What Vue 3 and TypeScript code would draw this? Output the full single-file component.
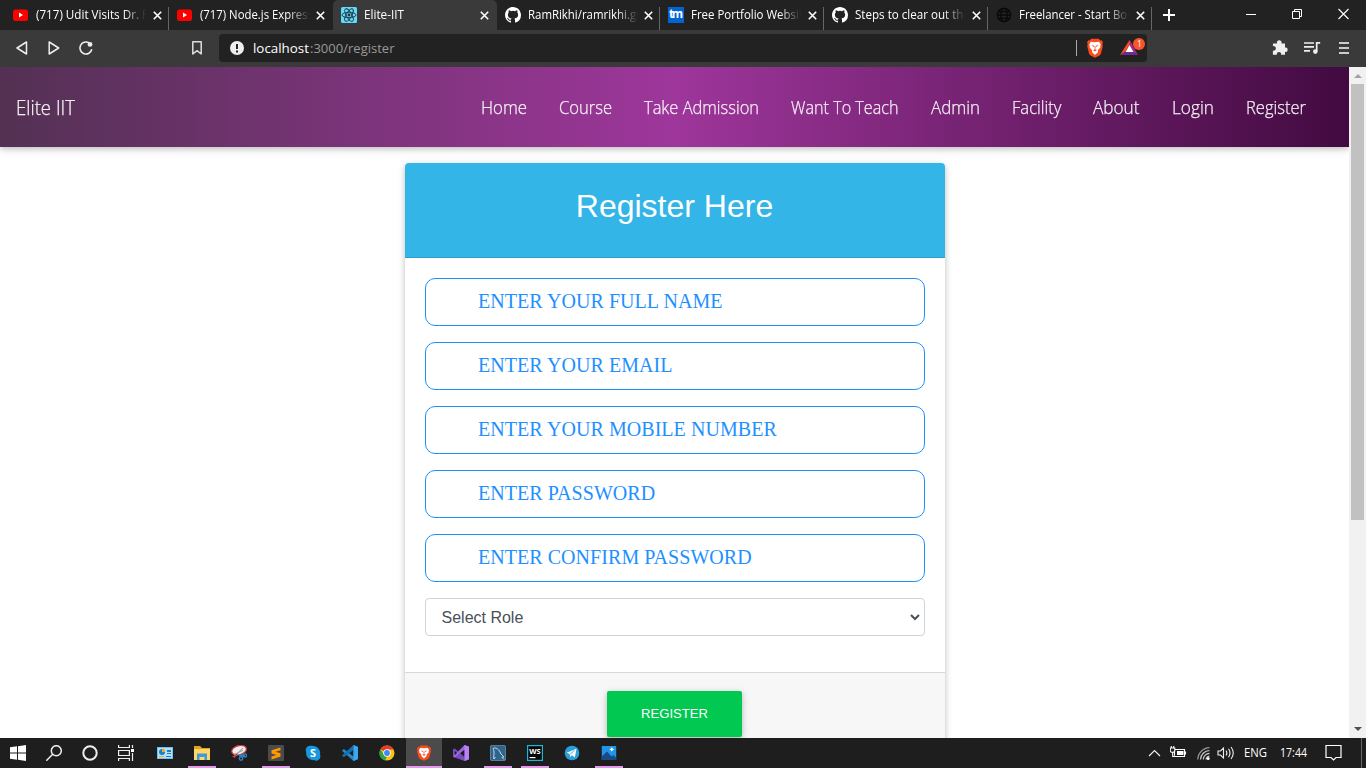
<script setup lang="ts">
import { h, type FunctionalComponent } from 'vue'

interface LabelProps { text: string; w: number; size: number; base: number; height: number; weight?: number }

// One line of text laid out to an exact advance width.
const Label: FunctionalComponent<LabelProps> = (p) =>
  h('svg', { width: p.w + 2, height: p.height, class: 'label' }, [
    h('text', {
      x: 0, y: p.base, textLength: p.w, lengthAdjust: 'spacingAndGlyphs',
      'font-size': p.size, 'font-weight': p.weight ?? 400, fill: 'currentColor',
    }, p.text),
  ])
Label.props = ['text', 'w', 'size', 'base', 'height', 'weight']

const youtube = '<rect x="0" y="2.5" width="15" height="11.5" rx="2.5" fill="#f00"/><path d="M6 5.6v5l4-2.5z" fill="#fff"/>'
const github = '<path fill="#fff" d="M8 0C3.58 0 0 3.58 0 8c0 3.54 2.29 6.53 5.47 7.59.4.07.55-.17.55-.38 0-.19-.01-.82-.01-1.49-2.01.37-2.53-.49-2.69-.94-.09-.23-.48-.94-.82-1.13-.28-.15-.68-.52-.01-.53.63-.01 1.08.58 1.23.82.72 1.21 1.87.87 2.33.66.07-.52.28-.87.51-1.07-1.78-.2-3.64-.89-3.64-3.95 0-.87.31-1.59.82-2.15-.08-.2-.36-1.02.08-2.12 0 0 .67-.21 2.2.82a7.6 7.6 0 0 1 4 0c1.53-1.04 2.2-.82 2.2-.82.44 1.1.16 1.92.08 2.12.51.56.82 1.27.82 2.15 0 3.07-1.87 3.75-3.65 3.95.29.25.54.73.54 1.48 0 1.07-.01 1.93-.01 2.2 0 .21.15.46.55.38A8 8 0 0 0 16 8c0-4.42-3.58-8-8-8z"/>'
const react = '<rect width="16" height="16" rx="1.5" fill="#61dafb"/><g fill="none" stroke="#20343c" stroke-width=".9"><ellipse cx="8" cy="8" rx="7" ry="2.7"/><ellipse cx="8" cy="8" rx="7" ry="2.7" transform="rotate(60 8 8)"/><ellipse cx="8" cy="8" rx="7" ry="2.7" transform="rotate(120 8 8)"/></g><circle cx="8" cy="8" r="1.4" fill="#20343c"/>'
const tm = '<rect width="16" height="16" fill="#0064d2"/><text x="1" y="11.2" font-size="11.5" font-weight="700" textLength="14" fill="#fff" font-family="Open Sans, sans-serif">tm</text>'
const globe = '<g fill="none" stroke="#080808" stroke-width="1.3"><circle cx="8" cy="8" r="6.7"/><ellipse cx="8" cy="8" rx="3.2" ry="6.7"/><path d="M1.3 8h13.4M2.5 4.6h11M2.5 11.4h11"/></g>'
const brave = '<path fill="#fb4b1c" d="M4.6.6h6.8l1.3 1.3 1.2-.2 1.2 1.8-.6 1.5.4 1.5-1.7 6.2-1.2 1.2L8 15.8l-4-1.9-1.200-1.200L1.100 6.500l.4-1.500-.6-1.500 1.200-1.800 1.200.2z"/><path fill="#fff" d="M4.300 3 8 3.300l3.700-.3 1.500 2.300-.6 1.200.2 1-2.300 2.300.3 1.300L8 13.500 5.200 11.100l.3-1.300-2.300-2.300.2-1-.6-1.200z"/><path fill="#e84a20" d="m4.800 5.500 2.400.6-.5 1zM11.200 5.500l-2.400.6.5 1zM7.500 6.500h1l-.2 2.300h-.6zM6.300 9.600 8 9l1.700.6L8 10.800z"/>'

const tabs = [
  { title: '(717) Udit Visits Dr. F', w: 112, icon: youtube },
  { title: '(717) Node.js Express', w: 113, icon: youtube, plain: true },
  { title: 'Elite-IIT', w: 40, icon: react, active: true },
  { title: 'RamRikhi/ramrikhi.gi', w: 111, icon: github },
  { title: 'Free Portfolio Websit', w: 112, icon: tm },
  { title: 'Steps to clear out the', w: 115, icon: github },
  { title: 'Freelancer - Start Boo', w: 115, icon: globe },
]

const links = [
  { text: 'Home', w: 46 }, { text: 'Course', w: 53 }, { text: 'Take Admission', w: 115 },
  { text: 'Want To Teach', w: 107.5 }, { text: 'Admin', w: 49 }, { text: 'Facility', w: 49.5 },
  { text: 'About', w: 46.5 }, { text: 'Login', w: 42 }, { text: 'Register', w: 60 },
]

const fields = [
  'ENTER YOUR FULL NAME', 'ENTER YOUR EMAIL', 'ENTER YOUR MOBILE NUMBER',
  'ENTER PASSWORD', 'ENTER CONFIRM PASSWORD',
]

const system = [
  '<path fill="#fff" d="M0 2.300 7 1.300V7.500H0zM8 1.200 16 0v7.500H8zM0 8.500h7v6.200l-7-1zM8 8.500h8V16l-8-1.200z"/>',
  '<g fill="none" stroke="#eee" stroke-width="1.500"><circle cx="10.300" cy="5.700" r="5"/><path d="M6.700 9.300.3 15.700"/></g>',
  '<circle cx="8" cy="8" r="6.700" fill="none" stroke="#eee" stroke-width="2"/>',
  '<g fill="none" stroke="#eee" stroke-width="1.200"><path d="M.6 0v2.500h10.800V0M.6 16v-2.500h10.800V16M.6 5.500h10.800v5H.6zM14.500 0v3M14.500 8v8"/></g><path fill="#fff" d="M13 4h3v3h-3z"/>',
]

const apps = [
  { icon: '<rect y="2" width="16" height="12" fill="#6dc0ef"/><rect x="1" y="3" width="14" height="10" fill="#b5e0f8"/><circle cx="5" cy="7" r="3" fill="#1b7fc4"/><path d="M5 7V4a3 3 0 0 1 3 3z" fill="#f6a821"/><path d="M10 5h4v2h-4zM10 8h4v1h-4zM9 11h5v1H9z" fill="#1b7fc4"/><path d="M2 11h5v1H2z" fill="#f6a821"/>' },
  { open: true, icon: '<path d="M0 1h6l2 2h8v12H0z" fill="#e8a317"/><path d="M0 4h16v11H0z" fill="#ffd766"/><path d="M3 15V8.500h10V15h-2.500v-3h-5v3z" fill="#3d9ae0"/>' },
  { icon: '<ellipse cx="8" cy="5.200" rx="7.500" ry="4.600" transform="rotate(-15 8 5)" fill="#f0eeee" stroke="#c53a3a" stroke-width="1.300"/><path d="m4 11 8-8M3 9.500l9-4" stroke="#a7abb2" stroke-width="1.100"/><path d="M1 11.500 7 8l-3 5z" fill="#cf3b3b"/><path d="m8 10 6 1" stroke="#3083c4" stroke-width="2"/><circle cx="10" cy="13.500" r="1.700" fill="none" stroke="#3083c4" stroke-width="1.400"/><circle cx="14" cy="10.500" r="1.600" fill="none" stroke="#3083c4" stroke-width="1.400"/>' },
  { open: true, icon: '<rect width="16" height="16" rx="1" fill="#4b4b4b"/><path fill="#ff9800" d="m12.500 2.500-9 2.800v3.200l5 1.600-5 1.500v2.800l9-2.800V8.300l-5-1.500 5-1.500z"/>' },
  { icon: '<path fill="#1598e0" d="M5 .8a7.300 7.300 0 0 1 4 .3 7 7 0 0 1 6 8.500 4.300 4.300 0 0 1-6 5.500A7 7 0 0 1 1.200 7 4.300 4.300 0 0 1 5 .8z"/><text x="4.900" y="12" font-size="11" font-weight="700" fill="#fff" font-family="Open Sans, sans-serif">S</text>' },
  { icon: '<path fill="#2489ca" d="m11.500 0 4.500 2v12l-4.500 2L0 5.800 1.800 4l9.700 7.500z"/><path fill="#1070b3" d="m11.500 0 .3 4.700-10 7.600L0 10.600z"/><path fill="#3ba7ef" d="m11.500 0 4.500 2v12l-4.500 2z"/>' },
  { icon: '<circle cx="8" cy="8" r="7.500" fill="#fbc116"/><path fill="#e33b2e" d="M8 8 1.500 4.200A7.500 7.500 0 0 1 14.700 4.600H8z"/><path fill="#2ba24c" d="M1.500 4.200 5 10l3 1.500-2 3.900A7.500 7.500 0 0 1 1.500 4.200z"/><circle cx="8" cy="8" r="3.700" fill="#fff"/><circle cx="8" cy="8" r="2.900" fill="#4285f4"/>' },
  { open: true, focus: true, icon: brave },
  { icon: '<path fill="#7a4bc4" d="M0 4.200 1.800 3.400 11.500 12v4L1.800 12.600 0 11.800z"/><path fill="#9d65dd" d="m11.500 0 4.500 1.800v12.400L11.500 16V4.700L1.800 12.600 0 11.500 11.500 0z"/><path fill="#1e1e1e" d="M1.800 6v4l2.200-2zM8 8l3.500-2.700v5.400z"/><path fill="#b981f5" d="m11.500 0 4.500 1.800v12.400L11.500 16z"/>' },
  { open: true, icon: '<rect x=".4" y=".4" width="15.200" height="15.200" rx="1.500" fill="#2f658d" stroke="#77a0bb" stroke-width=".7"/><path d="M4 14c-1-3 .5-4 0-7C3.500 4.500 3 3.500 3.500 3c3-.5 6 2 7 5 .5 1.500 2 2.500 3.500 4-2 0-2 0-2 .5l2 2M4 14l1.500-2" fill="none" stroke="#d5e5ef" stroke-width=".9"/>' },
  { open: true, icon: '<rect x=".6" y=".6" width="14.800" height="14.800" fill="#080808" stroke="#19b9dc" stroke-width="1.200"/><text x="2.200" y="8.700" font-size="7.500" font-weight="700" textLength="11.500" lengthAdjust="spacingAndGlyphs" fill="#fff" font-family="Open Sans, sans-serif">WS</text><path fill="#fff" d="M2.500 12h6v1.200h-6z"/>' },
  { icon: '<circle cx="8" cy="8" r="7.300" fill="#29a0da"/><path fill="#fff" d="m2.600 7.800 9.900-4-1.600 8.600-3-2.200-1.700 1.700-.5-2.900z"/><path stroke="#89bcd9" d="m5.600 9 5-3.800-4 4.500" fill="none" stroke-width=".8"/>' },
  { open: true, icon: '<rect x=".8" y="1" width="14.400" height="14" fill="#2196e8"/><path fill="#1b4a85" d="M.8 11.500 6 6.500l4.500 5 2-1.500 2.700 3V15H.8z"/><path fill="#fff" d="m10.800 2 .8 1.600 1.600.8-1.600.8-.8 1.600-.8-1.600-1.600-.8 1.600-.8z"/>' },
]
</script>

<template>
  <div class="screen">
    <div class="tabstrip">
      <div v-for="(t, i) in tabs" :key="i" class="tab" :class="{ active: t.active, plain: t.plain }">
        <svg class="favicon" width="16" height="16" viewBox="0 0 16 16" v-html="t.icon" />
        <div class="title"><Label :text="t.title" :w="t.w" :size="12" :base="19" :height="30" /></div>
        <svg class="close" width="9" height="9" viewBox="0 0 9 9"><path d="m.8.8 7.400 7.400M8.200.8.800 8.200" stroke="#fff" stroke-width="1.600" /></svg>
      </div>
      <svg class="plus" width="12" height="12"><path d="M6 0v12M0 6h12" stroke="#fff" stroke-width="2" /></svg>
      <div class="wincontrols">
        <svg width="46" height="28"><path d="M17 14.500h10" stroke="#fff" /></svg>
        <svg width="46" height="28"><path d="M17.500 11.500h7v7h-7zM19.500 11.500v-2h7v7h-2" fill="none" stroke="#fff" /></svg>
        <svg width="46" height="28"><path d="m17.500 9 10 10M27.500 9l-10 10" stroke="#fff" stroke-width="1.100" /></svg>
      </div>
    </div>

    <div class="toolbar">
      <svg class="tool" width="32" height="28" viewBox="-16 -14 32 28"><path d="M4.500-6v12L-5 0z" fill="none" stroke="#eee" stroke-width="1.500" stroke-linejoin="round" /></svg>
      <svg class="tool" width="32" height="28" viewBox="-16 -14 32 28"><path d="M-4.800-6v12L4.700 0z" fill="none" stroke="#eee" stroke-width="1.500" stroke-linejoin="round" /></svg>
      <svg class="tool" width="32" height="28" viewBox="-16 -14 32 28"><path d="M3-5.200A6 6 0 1 0 5.800 1.300" fill="none" stroke="#eee" stroke-width="1.600" /><circle cx="4" cy="-3.600" r="2.400" fill="#eee" /></svg>
      <svg class="tool mark" width="32" height="28" viewBox="-16 -14 32 28"><path d="M-4.200-6.200h8.400V6L0 2.700-4.200 6z" fill="none" stroke="#ddd" stroke-width="1.500" stroke-linejoin="round" /></svg>
      <div class="address">
        <svg class="info" width="14" height="14"><circle cx="7" cy="7" r="7" fill="#eee" /><path d="M7 3v5M7 9.500v2" stroke="#222" stroke-width="2" /></svg>
        <Label class="host" text="localhost" :w="56" :size="13.5" :base="19" :height="28" />
        <Label class="path" text=":3000/register" :w="84.5" :size="13.5" :base="19" :height="28" />
        <span class="rule" />
        <svg class="shield" width="18" height="20" viewBox="0 0 16 16" preserveAspectRatio="none" v-html="brave" />
        <svg class="bat" width="27" height="28"><path d="M1 21 10.500 6l3.500 6-3.500-1-4.500 7z" fill="#ff4b1f" /><path d="m1 21 5.500-3.500h8L19 21z" fill="#662d91" /><path d="m10.500 6 8.500 15-5-3.500-3.500-6.500z" fill="#a3278f" /><path d="m10.500 11-4 7h8z" fill="#fff" /><circle cx="20" cy="10" r="6" fill="#fb542b" /><text x="18" y="13.200" font-size="8.500" fill="#fff">1</text></svg>
      </div>
      <div class="actions">
        <svg width="32" height="28" viewBox="-16 -14 32 28"><path d="M-7-4.500h4a2.400 2.400 0 1 1 4.500 0H5v4a2.200 2.200 0 1 1 0 4.300v3H1.100a2.200 2.200 0 1 0-4.200 0h-4V2.600a2.300 2.300 0 1 0 0-4.400z" fill="#eee" /></svg>
        <svg width="32" height="28" viewBox="-16 -14 32 28"><path d="M-8-5H2M-8-1.200H2M-8 2.800h6" stroke="#eee" stroke-width="1.700" /><path d="M4.700 3.500V-5.200h3.500" fill="none" stroke="#eee" stroke-width="1.700" /><circle cx="3.300" cy="3.600" r="2.300" fill="#eee" /></svg>
        <svg width="32" height="28" viewBox="-16 -14 32 28"><path d="M-5-5H5M-5 0H5M-5 5H5" stroke="#ccc" stroke-width="2" /></svg>
      </div>
    </div>

    <div class="viewport">
      <div class="page">
        <nav class="navbar">
          <Label text="Elite IIT" :w="59" :size="19.5" :base="48" :height="80" :weight="300" />
          <div class="links">
            <Label v-for="l in links" :key="l.text" :text="l.text" :w="l.w" :size="17.8" :base="47" :height="80" :weight="300" />
          </div>
        </nav>
        <div class="card">
          <div class="card-header"><h3>Register Here</h3></div>
          <div class="card-body">
            <div v-for="f in fields" :key="f" class="field">{{ f }}</div>
            <div class="select">
              <span>Select Role</span>
              <svg width="10" height="7"><path d="m1 1 4 4 4-4" fill="none" stroke="#495057" stroke-width="2" /></svg>
            </div>
          </div>
          <div class="card-footer"><button>REGISTER</button></div>
        </div>
      </div>
      <div class="scrollbar">
        <svg width="17" height="17"><path d="M5 11h8L9 7z" fill="#a3a3a3" /></svg>
        <div class="thumb" />
        <svg width="17" height="17"><path d="M5 6h8l-4 4z" fill="#505050" /></svg>
      </div>
    </div>

    <div class="taskbar">
      <div v-for="(s, i) in system" :key="i" class="sys"><svg width="16" height="16" viewBox="0 0 16 16" v-html="s" /></div>
      <div class="apps">
        <div v-for="(a, i) in apps" :key="i" class="app" :class="{ open: a.open, focus: a.focus }">
          <svg width="16" height="16" viewBox="0 0 16 16" v-html="a.icon" />
        </div>
      </div>
      <div class="tray">
        <svg width="22" height="30"><path d="m1 18 5.500-5.500L12 18" fill="none" stroke="#eee" stroke-width="1.200" /></svg>
        <svg width="27" height="30"><path d="M4.500 11.500h10v7h-10zM15.500 13.500v3" fill="none" stroke="#fff" stroke-width="1.100" /><path d="M7 13h6.500v4H7z" fill="#fff" /><path d="M.3 10h4.500v2.500q0 1.800-2.300 1.800T.3 12.500zM1.300 8v2M3.700 8v2M2.700 14v4.500h2" fill="#1e1e1e" stroke="#fff" stroke-width="1.100" /></svg>
        <svg width="20" height="30"><g fill="none" stroke="#ccc" stroke-width="1.200"><path d="M.8 21.500A12 12 0 0 1 12.500 9.700" stroke="#999" /><path d="M3.500 21.500a9.300 9.300 0 0 1 9-9M6.300 21.500a6.400 6.400 0 0 1 6.200-6.200M9 21.500a4 4 0 0 1 3.500-3.500" /></g><circle cx="11.200" cy="20.500" r="1.500" fill="#fff" /></svg>
        <svg width="27" height="30"><g fill="none" stroke="#eee" stroke-width="1.100"><path d="M1 13h2.500l3-3v10l-3-3H1zM9 12.500q1.800 2.500 0 5M11.500 10.800q3 4.200 0 8.400M14 9q4.500 6 0 12" /></g></svg>
        <Label text="ENG" :w="23" :size="12" :base="19" :height="30" />
        <Label class="clock" text="17:44" :w="27" :size="12" :base="19" :height="30" />
        <svg class="notes" width="18" height="30"><path d="M1 7.500h15v12h-5L8.500 22 6 19.500H1z" fill="none" stroke="#fff" stroke-width="1.200" /></svg>
        <span class="peek" />
      </div>
    </div>
  </div>
</template>

<style>
html, body { overflow: hidden; }
</style>

<style scoped>
* { box-sizing: border-box; }
.screen { width: 1366px; height: 768px; display: flex; flex-direction: column; overflow: hidden; background: #fff; font-family: "Open Sans", "Noto Sans", sans-serif; }
svg { display: block; flex: none; }
.label { overflow: visible; }

.tabstrip { height: 30px; flex: none; display: flex; background: #222; padding-left: 5px; color: #fff; }
.tab { width: 163.850px; flex: none; height: 30px; display: flex; align-items: center; padding-left: 8px; position: relative; }
.tab::after { content: ""; position: absolute; right: 0; top: 7px; width: 1px; height: 23px; background: #666; }
.tab.active { background: #3a3a3a; border-radius: 5px 5px 0 0; }
.tab.active::after, .tab.plain::after { display: none; }
.title { width: 111px; height: 30px; margin-left: 7px; overflow: hidden; -webkit-mask-image: linear-gradient(to right, #000 88px, transparent 110px); mask-image: linear-gradient(to right, #000 88px, transparent 110px); }
.close { margin-left: 5.500px; }
.plus { margin: 9px 0 0 11px; }
.wincontrols { margin-left: auto; display: flex; margin-right: -1px; }

.toolbar { height: 37px; flex: none; display: flex; align-items: center; background: #3a3a3a; padding: 0 6px 1px; }
.mark { margin-left: 79px; }
.address { width: 928px; height: 28px; margin-left: 6px; border-radius: 4px; background: #222; display: flex; align-items: center; color: #fff; padding-left: 11px; }
.info { margin-right: 9px; }
.path { color: #999; margin-left: -1.500px; }
.rule { width: 1px; height: 16px; background: #aaa; margin-left: auto; }
.shield { margin-left: 9px; }
.bat { margin: 0 1px 0 15px; }
.actions { margin-left: auto; display: flex; }

.viewport { height: 671px; flex: none; display: flex; overflow: hidden; }
.page { width: 1349px; height: 671px; overflow: hidden; }
.navbar { height: 80px; display: flex; justify-content: space-between; padding: 0 41.500px 0 16px; background: linear-gradient(to right, #533153, #9e369b 50%, #420a40); box-shadow: 0 2px 5px rgba(0, 0, 0, .16), 0 2px 10px rgba(0, 0, 0, .12); color: #fff; }
.navbar .label { opacity: .93; stroke: #fff; stroke-width: .25px; }
.links { display: flex; gap: 30px; }

.card { width: 540px; margin: 16px 0 0 405px; border-radius: 4px; background: #fff; box-shadow: 0 2px 5px rgba(0, 0, 0, .16), 0 2px 10px rgba(0, 0, 0, .12); font-family: "Liberation Sans", Arial, sans-serif; }
.card-header { height: 95px; background: #33b5e7; border-bottom: 1px solid #2c9fca; border-radius: 4px 4px 0 0; padding: 24px 1px 0 0; color: #fff; text-align: center; }
h3 { margin: 0; font-size: 32px; line-height: 38px; font-weight: 400; }
.card-body { padding: 20px; height: 414px; }
.field { height: 48px; margin-bottom: 16px; border: 1px solid #1e90ff; border-radius: 10px; padding-left: 52px; font: 20px/44px "Liberation Serif", "Times New Roman", serif; letter-spacing: .05px; color: #1e90ff; }
.select { height: 38px; border: 1px solid #ced4da; border-radius: 4px; padding: 0 4px 0 15.500px; display: flex; align-items: center; justify-content: space-between; font-size: 16px; color: #495057; }
.select span { line-height: 20px; padding-top: 1px; }
.card-footer { height: 95px; border-top: 1px solid #d8d8d8; background: #f7f7f7; padding: 18px 0 0 202px; }
button { display: block; width: 135px; height: 46px; border: 0; border-radius: 2px; background: #00c851; color: #fff; padding: 0; font: 13.100px/44px "Liberation Sans", Arial, sans-serif; box-shadow: 0 2px 5px rgba(0, 0, 0, .16), 0 2px 10px rgba(0, 0, 0, .12); }

.scrollbar { width: 17px; height: 671px; background: #f1f1f1; display: flex; flex-direction: column; }
.thumb { width: 13px; height: 436px; margin: 0 2px auto; background: #c1c1c1; }

.taskbar { height: 30px; flex: none; background: #1e1e1e; display: flex; color: #fff; }
.sys { width: 36px; display: flex; align-items: center; justify-content: center; }
.apps { display: flex; margin-left: 3px; }
.app { width: 36px; height: 30px; margin-right: 1px; display: flex; align-items: center; justify-content: center; position: relative; }
.app.open::after { content: ""; position: absolute; bottom: 0; left: 4px; right: 4px; height: 2px; background: #e698ee; }
.app.focus { background: #4b4b4b; }
.app.focus::after { left: 0; right: 0; }
.tray { margin-left: auto; display: flex; }
.clock { margin-left: 11px; }
.notes { margin-left: 16px; }
.peek { width: 1px; height: 30px; background: #666; margin: 0 4px 0 18px; }
</style>
